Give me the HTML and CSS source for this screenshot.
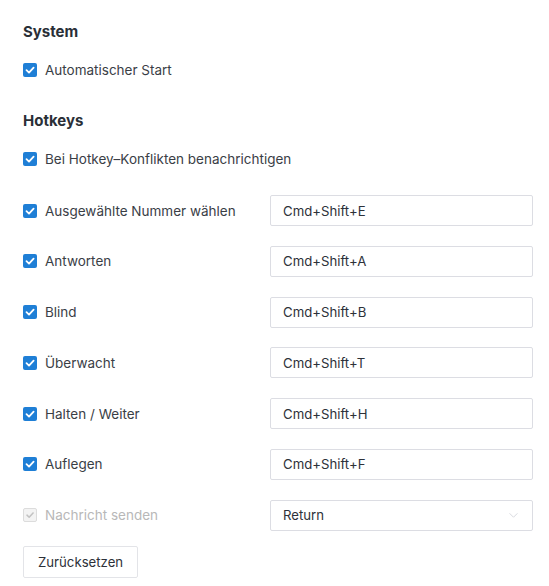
FILE: index.html
```html
<!DOCTYPE html>
<html lang="de">
<head>
<meta charset="utf-8">
<title>Einstellungen</title>
<link rel="stylesheet" href="styles.css">
</head>
<body>
<div class="page">
  <h2 class="section-title">System</h2>
  <label class="check">
    <span class="box on"><svg viewBox="0 0 14 14"><polyline points="3.5,7.2 6,9.6 10.6,4.6"/></svg></span>
    <span class="label">Automatischer Start</span>
  </label>

  <h2 class="section-title hotkeys">Hotkeys</h2>
  <label class="check">
    <span class="box on"><svg viewBox="0 0 14 14"><polyline points="3.5,7.2 6,9.6 10.6,4.6"/></svg></span>
    <span class="label">Bei Hotkey–Konflikten benachrichtigen</span>
  </label>

  <div class="rows">
    <div class="row">
      <label class="check"><span class="box on"><svg viewBox="0 0 14 14"><polyline points="3.5,7.2 6,9.6 10.6,4.6"/></svg></span><span class="label">Ausgewählte Nummer wählen</span></label>
      <div class="field">Cmd+Shift+E</div>
    </div>
    <div class="row">
      <label class="check"><span class="box on"><svg viewBox="0 0 14 14"><polyline points="3.5,7.2 6,9.6 10.6,4.6"/></svg></span><span class="label">Antworten</span></label>
      <div class="field">Cmd+Shift+A</div>
    </div>
    <div class="row">
      <label class="check"><span class="box on"><svg viewBox="0 0 14 14"><polyline points="3.5,7.2 6,9.6 10.6,4.6"/></svg></span><span class="label">Blind</span></label>
      <div class="field">Cmd+Shift+B</div>
    </div>
    <div class="row">
      <label class="check"><span class="box on"><svg viewBox="0 0 14 14"><polyline points="3.5,7.2 6,9.6 10.6,4.6"/></svg></span><span class="label">Überwacht</span></label>
      <div class="field">Cmd+Shift+T</div>
    </div>
    <div class="row">
      <label class="check"><span class="box on"><svg viewBox="0 0 14 14"><polyline points="3.5,7.2 6,9.6 10.6,4.6"/></svg></span><span class="label">Halten / Weiter</span></label>
      <div class="field">Cmd+Shift+H</div>
    </div>
    <div class="row">
      <label class="check"><span class="box on"><svg viewBox="0 0 14 14"><polyline points="3.5,7.2 6,9.6 10.6,4.6"/></svg></span><span class="label">Auflegen</span></label>
      <div class="field">Cmd+Shift+F</div>
    </div>
    <div class="row">
      <label class="check disabled"><span class="box off"><svg viewBox="0 0 14 14"><polyline points="3.5,7.2 6,9.6 10.6,4.6"/></svg></span><span class="label">Nachricht senden</span></label>
      <div class="field select">Return<svg class="chev" viewBox="0 0 12 8"><polyline points="1.5,1.5 6,6 10.5,1.5"/></svg></div>
    </div>
  </div>

  <button class="reset" type="button">Zurücksetzen</button>
</div>
</body>
</html>
```

FILE: styles.css
```css
* { box-sizing: border-box; }
html, body { margin: 0; padding: 0; background: #fff; }
body {
  font-family: Inter, "Noto Sans", "Liberation Sans", sans-serif;
  font-size: 13.5px;
  color: #3a3e46;
}
.page {
  padding: 22px 16px 0 23px;
  display: flex;
  flex-direction: column;
  align-items: flex-start;
}
.section-title {
  margin: 0 0 18px;
  font-size: 15px;
  font-weight: 700;
  line-height: 20px;
  color: #2a2f37;
}
.section-title.hotkeys { margin-top: 31px; }
.check {
  display: flex;
  align-items: center;
  gap: 8px;
  height: 20px;
  line-height: 20px;
}
.box {
  width: 14px;
  height: 14px;
  border-radius: 2px;
  display: flex;
  align-items: center;
  justify-content: center;
  flex: none;
}
.box svg { width: 14px; height: 14px; }
.box polyline { fill: none; stroke-width: 1.8; stroke-linecap: round; stroke-linejoin: round; }
.box.on { background: #1f7fd6; }
.box.on polyline { stroke: #fff; }
.box.off { background: #f3f3f3; border: 1px solid #dcdcdc; }
.box.off svg { width: 12px; height: 12px; }
.box.off polyline { stroke: #c2c2c2; }
.check.disabled .label { color: #b8b8b8; }
.rows {
  margin-top: 26px;
  display: flex;
  flex-direction: column;
  gap: 19.8px;
  width: 510px;
}
.row {
  display: grid;
  grid-template-columns: 247px 263px;
  align-items: center;
  height: 31px;
}
.field {
  height: 31px;
  border: 1px solid #dcdde3;
  border-radius: 2px;
  padding: 0 12px;
  display: flex;
  align-items: center;
  font-size: 13.2px;
  color: #2d3139;
}
.field.select { justify-content: space-between; }
.chev { width: 11px; height: 7px; margin-right: 1px; }
.chev polyline { fill: none; stroke: #cdd0d6; stroke-width: 0.9; }
.reset {
  margin-top: 15px;
  height: 32px;
  padding: 0 14px;
  font: inherit;
  font-size: 13.2px;
  color: #2d3139;
  background: #fff;
  border: 1px solid #e3e4e8;
  border-radius: 2px;
}
```
